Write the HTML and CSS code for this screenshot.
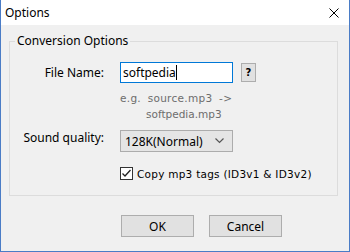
FILE: index.html
```html
<!DOCTYPE html>
<html lang="en">
<head>
  <meta charset="UTF-8">
  <title>Options</title>
  <link rel="stylesheet" href="styles.css">
</head>
<body>
  <div class="window">
    <div class="titlebar">
      <span class="title">Options</span>
      <svg class="close" width="10" height="10" viewBox="0 0 10 10">
        <path d="M0.5 0.5 L9.5 9.5 M9.5 0.5 L0.5 9.5" stroke="#000" stroke-width="1"/>
      </svg>
    </div>
    <div class="content">
      <fieldset class="groupbox">
        <legend>Conversion Options</legend>
        <div class="form">
          <label class="label">File Name:</label>
          <div class="field">
            <div class="textbox">softpedia<span class="caret"></span></div>
            <span class="help-btn">?</span>
          </div>
          <div></div>
          <div class="hint">
            <div class="hint-first">e.g. source.mp3 -&gt;</div>
            <div class="hint-second">softpedia.mp3</div>
          </div>
          <label class="label">Sound quality:</label>
          <div class="select">
            <span>128K(Normal)</span>
            <svg width="9" height="6" viewBox="0 0 9 6">
              <path d="M0.5 0.5 L4.5 4.5 L8.5 0.5" fill="none" stroke="#555" stroke-width="1.2"/>
            </svg>
          </div>
          <div></div>
          <div class="check-row">
            <span class="checkbox">
              <svg width="11" height="11" viewBox="0 0 11 11">
                <path d="M1.5 5.5 L4 8 L9.5 2" fill="none" stroke="#222" stroke-width="1.3"/>
              </svg>
            </span>
            <span class="check-label">Copy mp3 tags (ID3v1 &amp; ID3v2)</span>
          </div>
        </div>
      </fieldset>
      <div class="buttons">
        <button class="btn">OK</button>
        <button class="btn">Cancel</button>
      </div>
    </div>
  </div>
</body>
</html>
```

FILE: styles.css
```css
body {
  margin: 0;
  font-family: "Noto Sans", "Open Sans", sans-serif;
  font-size: 12px;
  color: #000;
}
.window {
  width: 350px;
  height: 252px;
  box-sizing: border-box;
  border: 1px solid #4a7cc6;
  border-top: none;
  background: #f0f0f0;
  display: flex;
  flex-direction: column;
}
.titlebar {
  height: 25px;
  background: #fff;
  display: flex;
  align-items: center;
  justify-content: space-between;
  padding: 0 10px 0 4px;
}
.title {
  font-size: 12px;
}
.close {
  display: block;
}
.content {
  padding: 8px 11px 0 8px;
}
.groupbox {
  margin: 0;
  padding: 0;
  height: 163px;
  box-sizing: border-box;
  border: 1px solid #dcdcdc;
}
.groupbox legend {
  margin-left: 5px;
  padding: 0 2px;
  line-height: 16px;
}
.form {
  display: grid;
  grid-template-columns: 94px 1fr;
  column-gap: 16px;
  margin-top: 13px;
}
.label {
  text-align: right;
  align-self: center;
}
.field {
  display: flex;
  align-items: center;
  gap: 8px;
}
.textbox {
  width: 113px;
  height: 21px;
  box-sizing: border-box;
  border: 1px solid #0078d7;
  background: #fff;
  padding: 0 2px;
  line-height: 19px;
  display: flex;
  align-items: center;
}
.caret {
  width: 1px;
  height: 15px;
  background: #000;
}
.help-btn {
  width: 15px;
  height: 19px;
  box-sizing: border-box;
  border: 1px solid #adadad;
  background: #e1e1e1;
  font-family: "DejaVu Sans", sans-serif;
  font-size: 10px;
  font-weight: bold;
  display: flex;
  align-items: center;
  justify-content: center;
}
.hint {
  font-family: "DejaVu Sans", sans-serif;
  font-size: 10.5px;
  color: #6d6d6d;
  line-height: 16px;
  margin-top: 7px;
}
.hint-first {
  word-spacing: 3px;
  letter-spacing: 0.3px;
}
.hint-second {
  padding-left: 26px;
}
.select {
  margin-top: 8px;
  width: 113px;
  height: 22px;
  box-sizing: border-box;
  border: 1px solid #acacac;
  background: #e5e5e5;
  display: flex;
  align-items: center;
  justify-content: space-between;
  padding: 0 8px 0 4px;
}
.check-row {
  display: flex;
  align-items: center;
  gap: 4px;
  margin-top: 15px;
}
.checkbox {
  width: 13px;
  height: 13px;
  box-sizing: border-box;
  border: 1px solid #333;
  background: #fff;
  display: flex;
  align-items: center;
  justify-content: center;
}
.checkbox svg {
  display: block;
}
.check-label {
  font-family: "DejaVu Sans", sans-serif;
  font-size: 10.5px;
  letter-spacing: 0.25px;
}
.buttons {
  display: flex;
  justify-content: flex-end;
  gap: 15px;
  margin-top: 19px;
  padding-right: 56px;
}
.btn {
  width: 73px;
  height: 22px;
  border: 1px solid #adadad;
  background: #e1e1e1;
  font-family: "Noto Sans", "Open Sans", sans-serif;
  font-size: 12px;
  padding: 0;
  color: #000;
}
```
